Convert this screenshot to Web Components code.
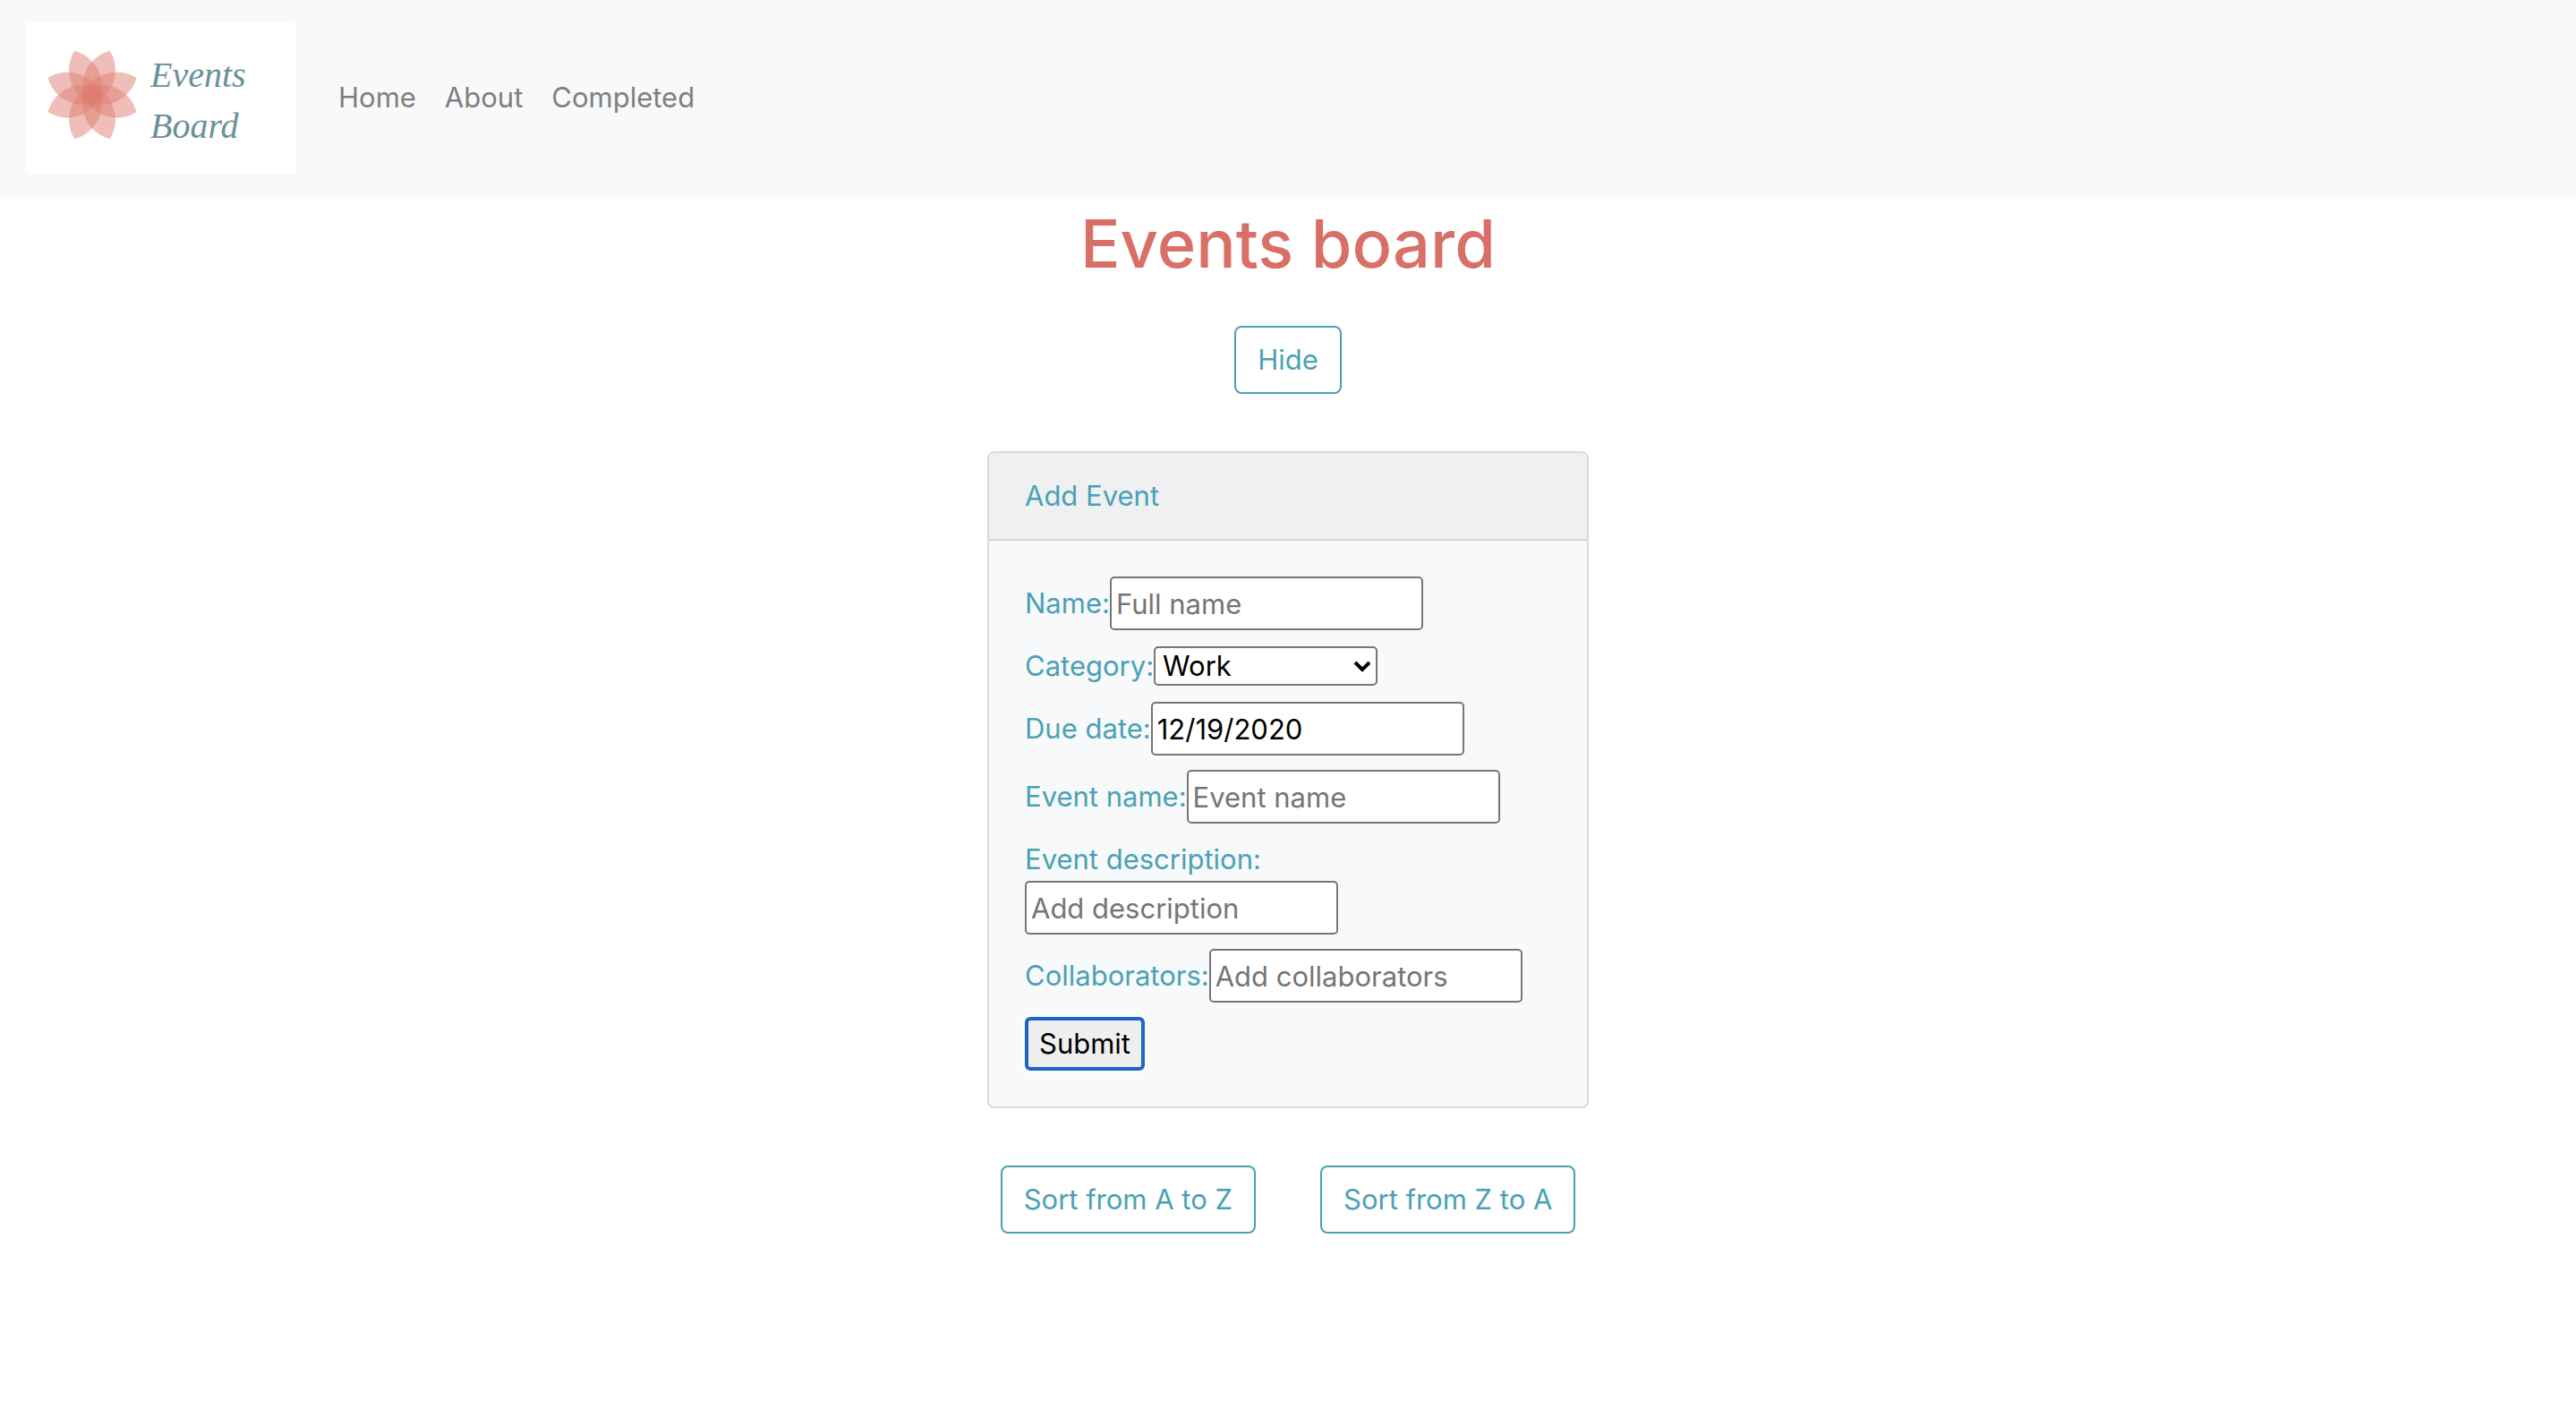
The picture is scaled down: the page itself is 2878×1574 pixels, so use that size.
<!DOCTYPE html>
<html lang="en">
<head>
<meta charset="utf-8">
<title>Events Board</title>
<style>
  body {
    margin: 0;
    background: #fff;
    color: #4aa1b5;
    font-family: Inter, "Liberation Sans", sans-serif;
    font-size: 31px;
    line-height: 48px;
  }
</style>
</head>
<body>
<events-app></events-app>

<template id="tpl-logo">
  <style>
    :host { display: block; background: #fff; }
    svg { display: block; }
    text { font-family: "Liberation Serif", serif; font-style: italic; font-size: 40px; fill: #68919a; }
    .petals { fill: #df7e72; fill-opacity: .5; }
  </style>
  <svg width="300" height="170" viewBox="0 0 300 170" role="img" aria-label="Events Board">
    <defs><path id="petal" d="M0 -53A41 41 0 0 1 0 13A41 41 0 0 1 0 -53Z"/></defs>
    <g class="petals" transform="translate(73 82)">
      <use href="#petal" transform="rotate(22)"/>
      <use href="#petal" transform="rotate(69)"/>
      <use href="#petal" transform="rotate(111)"/>
      <use href="#petal" transform="rotate(158)"/>
      <use href="#petal" transform="rotate(202)"/>
      <use href="#petal" transform="rotate(249)"/>
      <use href="#petal" transform="rotate(291)"/>
      <use href="#petal" transform="rotate(338)"/>
    </g>
    <text x="138" y="73">Events</text>
    <text x="138" y="130">Board</text>
  </svg>
</template>

<template id="tpl-nav">
  <style>
    :host { display: block; background: #f8f9fb; }
    nav { display: flex; align-items: center; gap: 32px; padding: 24px 30px 26px; }
    ul { display: flex; margin: 0; padding: 0; list-style: none; }
    a { display: block; color: #7f7f7f; text-decoration: none; }
    li a { padding: 16px; }
  </style>
  <nav>
    <a href="#home"><brand-logo></brand-logo></a>
    <ul>
      <li><a href="#home">Home</a></li>
      <li><a href="#about">About</a></li>
      <li><a href="#completed">Completed</a></li>
    </ul>
  </nav>
</template>

<template id="tpl-button">
  <style>
    :host { display: inline-block; }
    button {
      display: block;
      box-sizing: border-box;
      padding: 12px 24px;
      border: 2px solid #4aa1b5;
      border-radius: 8px;
      background: transparent;
      color: #4aa1b5;
      font: inherit;
    }
  </style>
  <button type="button"><slot></slot></button>
</template>

<template id="tpl-card">
  <style>
    :host {
      display: block;
      box-sizing: border-box;
      width: 100%;
      max-width: 672px;
      border: 2px solid #d9dadc;
      border-radius: 8px;
      background: #f8f9fb;
      overflow: hidden;
    }
    header { padding: 24px 40px; border-bottom: 2px solid #d2d3d5; background: #eff0f2; }
    .body { padding: 40px; }
  </style>
  <header><slot name="header"></slot></header>
  <div class="body"><slot></slot></div>
</template>

<template id="tpl-form">
  <style>
    :host { display: block; }
    form { display: flex; flex-direction: column; align-items: flex-start; gap: 16px; }
    .row { display: flex; flex-wrap: wrap; align-items: center; }
    input, select, button { box-sizing: border-box; margin: 0; font: inherit; color: #000; }
    input {
      width: 350px;
      height: 60px;
      padding: 2px 5px;
      border: 2px solid #767676;
      border-radius: 5px;
      background: #fff;
    }
    input::placeholder { color: #757575; opacity: 1; }
    .select { display: grid; align-items: center; }
    .select > * { grid-area: 1 / 1; }
    select {
      appearance: none;
      width: 250px;
      height: 44px;
      padding: 0 8px;
      border: 2px solid #767676;
      border-radius: 5px;
      background: #fff;
      line-height: 40px;
    }
    svg { justify-self: end; margin-right: 7px; pointer-events: none; }
    button {
      height: 60px;
      padding: 0 12px;
      border: 4px solid #1f63cc;
      border-radius: 6px;
      background: #efefef;
      box-shadow: 0 0 0 2px #fff;
    }
  </style>
  <form>
    <div class="row"><label for="name">Name:</label><input id="name" type="text" placeholder="Full name"></div>
    <div class="row">
      <label for="category">Category:</label>
      <div class="select">
        <select id="category"><option>Work</option></select>
        <svg width="20" height="14" viewBox="0 0 20 14" aria-hidden="true"><path d="M2 3L10 11L18 3" fill="none" stroke="#000" stroke-width="4"/></svg>
      </div>
    </div>
    <div class="row"><label for="due">Due date:</label><input id="due" type="text" value="12/19/2020"></div>
    <div class="row"><label for="event">Event name:</label><input id="event" type="text" placeholder="Event name"></div>
    <div class="row"><label for="description">Event description:</label><input id="description" type="text" placeholder="Add description"></div>
    <div class="row"><label for="people">Collaborators:</label><input id="people" type="text" placeholder="Add collaborators"></div>
    <button type="submit">Submit</button>
  </form>
</template>

<template id="tpl-app">
  <style>
    :host { display: block; }
    main { display: flex; flex-direction: column; align-items: center; }
    h1 { margin: 0 0 44px; padding-top: 4px; color: #d87068; font-size: 74px; line-height: 96px; font-weight: 500; }
    event-card { margin: 64px 0; }
    .sort { display: flex; gap: 72px; }
  </style>
  <site-nav></site-nav>
  <main>
    <h1>Events board</h1>
    <outline-button>Hide</outline-button>
    <event-card>
      <span slot="header">Add Event</span>
      <event-form></event-form>
    </event-card>
    <div class="sort">
      <outline-button>Sort from A to Z</outline-button>
      <outline-button>Sort from Z to A</outline-button>
    </div>
  </main>
</template>

<script>
  class TemplateElement extends HTMLElement {
    constructor() {
      super();
      const template = document.getElementById(this.constructor.template);
      this.attachShadow({ mode: "open" }).append(template.content.cloneNode(true));
    }
  }
  customElements.define("brand-logo", class extends TemplateElement { static template = "tpl-logo"; });
  customElements.define("site-nav", class extends TemplateElement { static template = "tpl-nav"; });
  customElements.define("outline-button", class extends TemplateElement { static template = "tpl-button"; });
  customElements.define("event-card", class extends TemplateElement { static template = "tpl-card"; });
  customElements.define("event-form", class extends TemplateElement {
    static template = "tpl-form";
    connectedCallback() {
      this.shadowRoot.querySelector("form").addEventListener("submit", (e) => e.preventDefault());
    }
  });
  customElements.define("events-app", class extends TemplateElement { static template = "tpl-app"; });
</script>
</body>
</html>
